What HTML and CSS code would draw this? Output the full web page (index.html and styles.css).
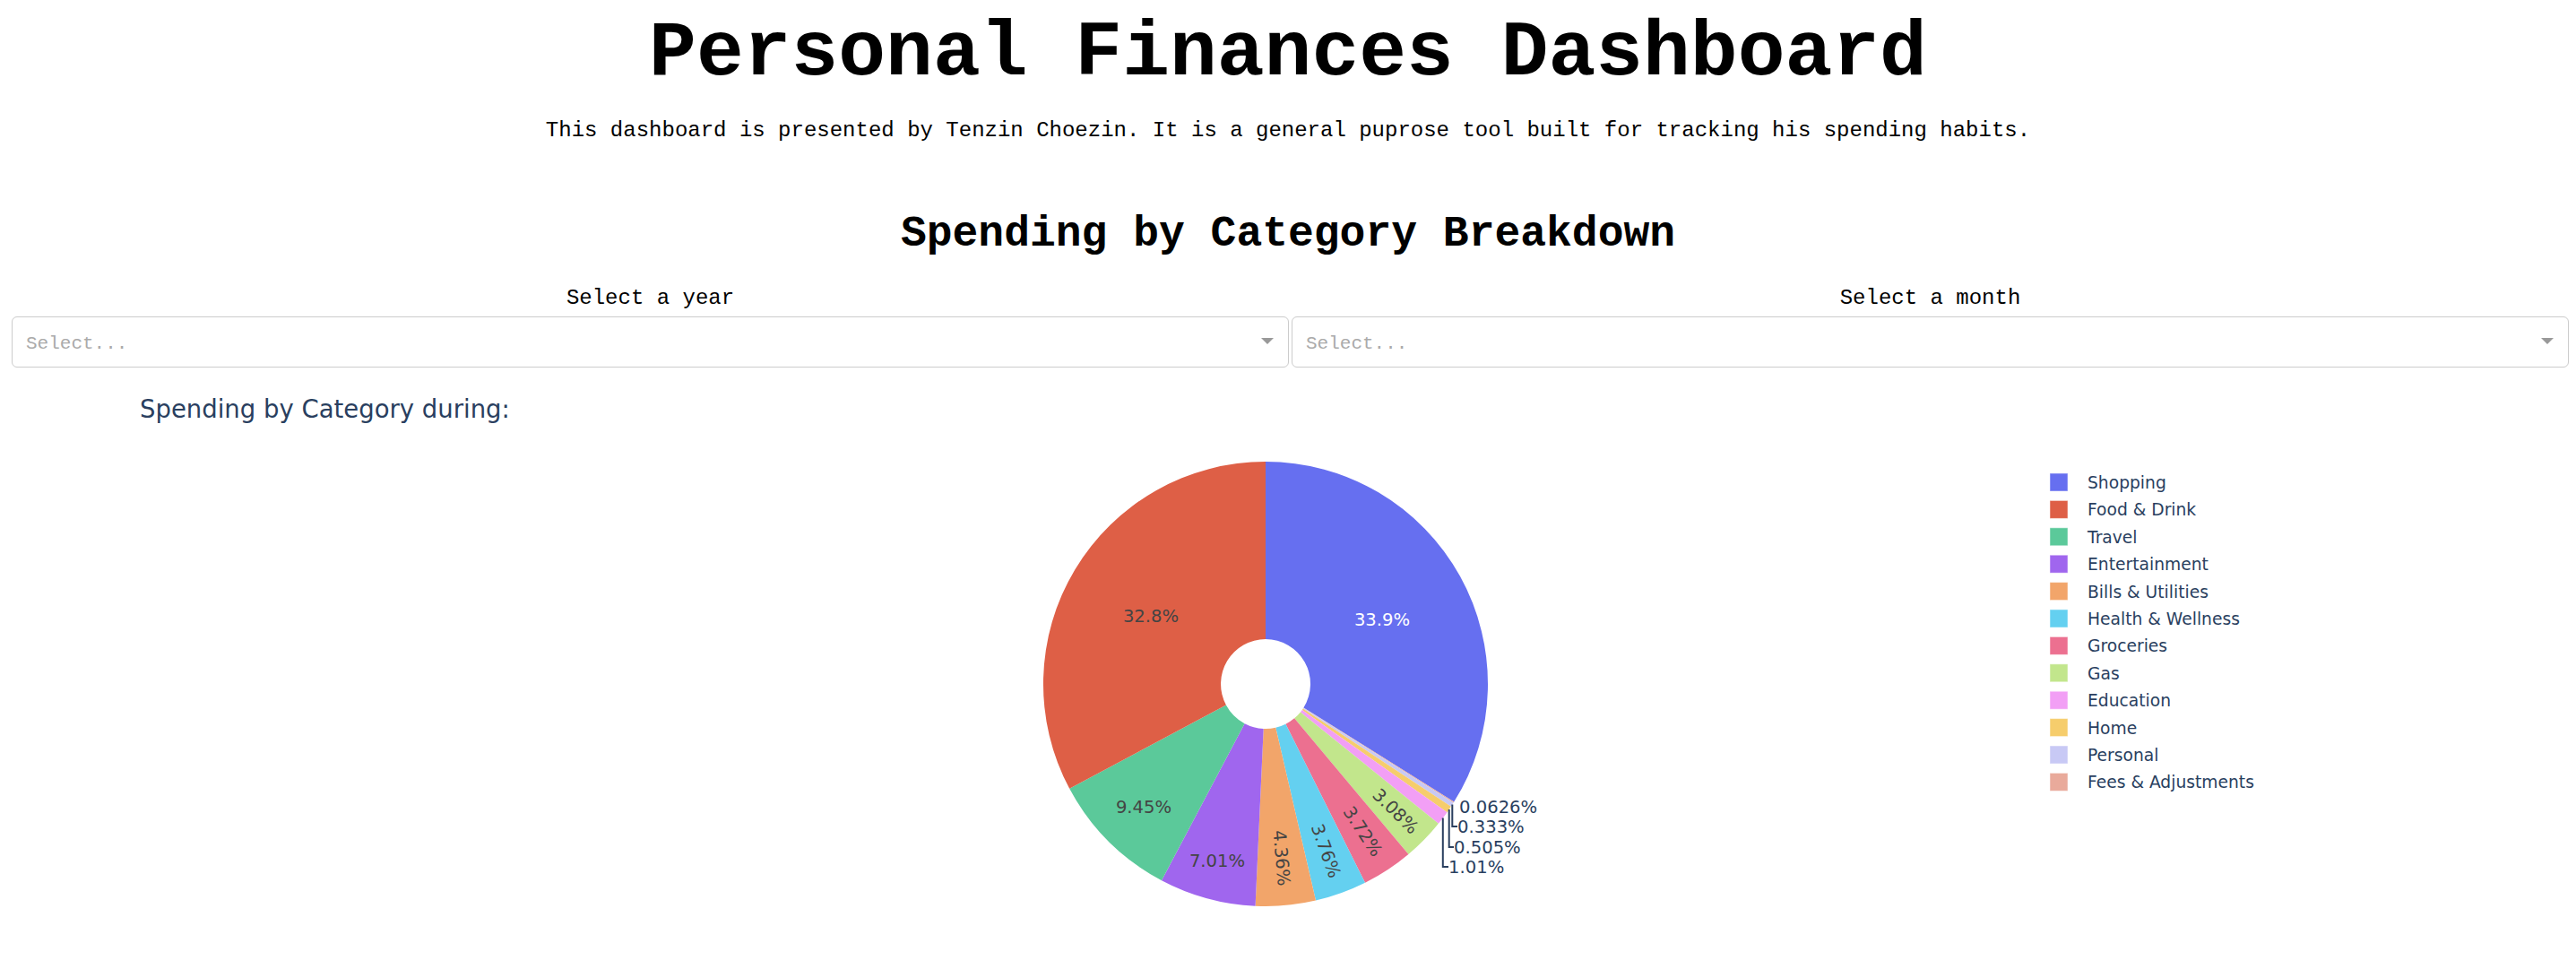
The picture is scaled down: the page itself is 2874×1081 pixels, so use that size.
FILE: index.html
```html
<!DOCTYPE html>
<html lang="en">
<head>
<meta charset="utf-8">
<title>Personal Finances Dashboard</title>
<link rel="stylesheet" href="styles.css">
</head>
<body>
<div class="page">
  <h1 class="title">Personal Finances Dashboard</h1>
  <p class="subtitle">This dashboard is presented by Tenzin Choezin. It is a general puprose tool built for tracking his spending habits.</p>
  <h2 class="section-title">Spending by Category Breakdown</h2>
  <div class="controls">
    <div class="control">
      <label class="control-label">Select a year</label>
      <div class="dropdown">
        <span class="placeholder">Select...</span>
        <span class="arrow"></span>
      </div>
    </div>
    <div class="control">
      <label class="control-label">Select a month</label>
      <div class="dropdown">
        <span class="placeholder">Select...</span>
        <span class="arrow"></span>
      </div>
    </div>
  </div>
  <div class="graph">
    <svg class="chart" width="2858" height="661" viewBox="8 420 2858 661" xmlns="http://www.w3.org/2000/svg">
      <text class="chart-title" x="156" y="456">Spending by Category during:</text>
      <g class="slices">
        <path fill="#666ff0" d="M1412 515 A248 248 0 0 1 1622.2 894.6 L1454.4 789.5 A50 50 0 0 0 1412 713 Z"/>
        <path fill="#e9aa9b" d="M1622.2 894.6 A248 248 0 0 1 1621.7 895.4 L1454.3 789.7 A50 50 0 0 0 1454.4 789.5 Z"/>
        <path fill="#c8c9f5" d="M1621.7 895.4 A248 248 0 0 1 1618.9 899.7 L1453.7 790.6 A50 50 0 0 0 1454.3 789.7 Z"/>
        <path fill="#f6cd6c" d="M1618.9 899.7 A248 248 0 0 1 1614.5 906.2 L1452.8 791.9 A50 50 0 0 0 1453.7 790.6 Z"/>
        <path fill="#f29ff5" d="M1614.5 906.2 A248 248 0 0 1 1604.9 918.8 L1450.9 794.4 A50 50 0 0 0 1452.8 791.9 Z"/>
        <path fill="#c2e68c" d="M1604.9 918.8 A248 248 0 0 1 1571.4 953.0 L1444.1 801.3 A50 50 0 0 0 1450.9 794.4 Z"/>
        <path fill="#ec7090" d="M1571.4 953.0 A248 248 0 0 1 1523.0 984.8 L1434.4 807.7 A50 50 0 0 0 1444.1 801.3 Z"/>
        <path fill="#64d0f0" d="M1523.0 984.8 A248 248 0 0 1 1468.0 1004.6 L1423.3 811.7 A50 50 0 0 0 1434.4 807.7 Z"/>
        <path fill="#f2a56a" d="M1468.0 1004.6 A248 248 0 0 1 1400.6 1010.7 L1409.7 812.9 A50 50 0 0 0 1423.3 811.7 Z"/>
        <path fill="#a066ee" d="M1400.6 1010.7 A248 248 0 0 1 1296.0 982.2 L1388.6 807.2 A50 50 0 0 0 1409.7 812.9 Z"/>
        <path fill="#5bc99a" d="M1296.0 982.2 A248 248 0 0 1 1193.2 879.8 L1367.9 786.5 A50 50 0 0 0 1388.6 807.2 Z"/>
        <path fill="#de5f46" d="M1193.2 879.8 A248 248 0 0 1 1412 515 L1412 713 A50 50 0 0 0 1367.9 786.5 Z"/>
      </g>
      <g class="inside-labels">
        <text class="light" x="1542" y="691">33.9%</text>
        <text x="1284" y="687">32.8%</text>
        <text x="1276" y="900">9.45%</text>
        <text x="1358" y="960">7.01%</text>
        <text transform="translate(1429.7 957.2) rotate(84.8)">4.36%</text>
        <text transform="translate(1479.1 949.3) rotate(70.2)">3.76%</text>
        <text transform="translate(1520.2 927.6) rotate(56.7)">3.72%</text>
        <text transform="translate(1556.8 905.2) rotate(44.5)">3.08%</text>
      </g>
      <g class="leaders">
        <path d="M1620.3 897.6 V922 H1626"/>
        <path d="M1616.7 903 V945 H1622"/>
        <path d="M1609.8 912.6 V967 H1616"/>
      </g>
      <g class="outside-labels">
        <text x="1628" y="900">0.0626%</text>
        <text x="1626" y="922">0.333%</text>
        <text x="1622" y="945">0.505%</text>
        <text x="1616" y="967">1.01%</text>
      </g>
      <g class="legend">
        <rect x="2287" y="528" width="20" height="20" fill="#666ff0"/>
        <text x="2329" y="538.5">Shopping</text>
        <rect x="2287" y="558.4" width="20" height="20" fill="#de5f46"/>
        <text x="2329" y="568.9">Food &amp; Drink</text>
        <rect x="2287" y="588.8" width="20" height="20" fill="#5bc99a"/>
        <text x="2329" y="599.3">Travel</text>
        <rect x="2287" y="619.2" width="20" height="20" fill="#a066ee"/>
        <text x="2329" y="629.7">Entertainment</text>
        <rect x="2287" y="649.6" width="20" height="20" fill="#f2a56a"/>
        <text x="2329" y="660.1">Bills &amp; Utilities</text>
        <rect x="2287" y="680" width="20" height="20" fill="#64d0f0"/>
        <text x="2329" y="690.5">Health &amp; Wellness</text>
        <rect x="2287" y="710.4" width="20" height="20" fill="#ec7090"/>
        <text x="2329" y="720.9">Groceries</text>
        <rect x="2287" y="740.8" width="20" height="20" fill="#c2e68c"/>
        <text x="2329" y="751.3">Gas</text>
        <rect x="2287" y="771.2" width="20" height="20" fill="#f29ff5"/>
        <text x="2329" y="781.7">Education</text>
        <rect x="2287" y="801.6" width="20" height="20" fill="#f6cd6c"/>
        <text x="2329" y="812.1">Home</text>
        <rect x="2287" y="832" width="20" height="20" fill="#c8c9f5"/>
        <text x="2329" y="842.5">Personal</text>
        <rect x="2287" y="862.4" width="20" height="20" fill="#e9aa9b"/>
        <text x="2329" y="872.9">Fees &amp; Adjustments</text>
      </g>
    </svg>
  </div>
</div>
</body>
</html>
```
FILE: styles.css
```css
html, body {
  margin: 0;
  padding: 0;
  background: #ffffff;
}

body {
  font-family: "Liberation Mono", "Courier New", monospace;
  color: #000000;
}

.page {
  padding: 0 8px;
}

.title {
  margin: 10px 0 0;
  font-size: 88px;
  line-height: 100px;
  font-weight: bold;
  text-align: center;
}

.subtitle {
  margin: 22px 0 0;
  font-size: 24px;
  line-height: 28px;
  text-align: center;
}

.section-title {
  margin: 72.6px 0 0;
  font-size: 48px;
  line-height: 56px;
  font-weight: bold;
  text-align: center;
}

.controls {
  display: grid;
  grid-template-columns: 1fr 1fr;
  column-gap: 3px;
  margin-top: 30.4px;
  padding-left: 5px;
}

.control {
  display: flex;
  flex-direction: column;
}

.control-label {
  font-size: 24px;
  line-height: 28px;
  text-align: center;
}

.dropdown {
  margin-top: 6.4px;
  box-sizing: border-box;
  height: 57px;
  border: 1px solid #cccccc;
  border-radius: 6px;
  padding: 4px 16px 0 15px;
  display: flex;
  justify-content: space-between;
  align-items: flex-start;
  background: #ffffff;
}

.placeholder {
  font-size: 21px;
  line-height: 51px;
  color: #aaaaaa;
}

.arrow {
  margin-top: 19px;
  width: 0;
  height: 0;
  border-style: solid;
  border-width: 7.5px 7.5px 0 7.5px;
  border-color: #999999 transparent transparent transparent;
}

.graph {
  margin-top: 10px;
}

.chart {
  display: block;
  font-family: "DejaVu Sans", Verdana, sans-serif;
}

.chart-title {
  font-size: 27.5px;
  fill: #2a3f5f;
  dominant-baseline: central;
}

.inside-labels text {
  font-size: 19.6px;
  fill: #444444;
  text-anchor: middle;
  dominant-baseline: central;
}

.inside-labels text.light {
  fill: #ffffff;
}

.leaders path {
  fill: none;
  stroke: #2a3f5f;
  stroke-width: 2;
}

.outside-labels text {
  font-size: 19.6px;
  fill: #2a3f5f;
  dominant-baseline: central;
}

.legend text {
  font-size: 18.7px;
  fill: #2a3f5f;
  dominant-baseline: central;
}

.legend rect {
  stroke: #ffffff;
  stroke-opacity: 0.5;
  stroke-width: 1;
}
```
